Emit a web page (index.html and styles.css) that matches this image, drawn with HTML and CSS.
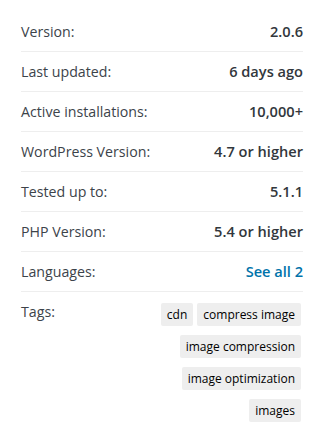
FILE: index.html
```html
<!DOCTYPE html>
<html lang="en">
<head>
  <meta charset="UTF-8">
  <meta name="viewport" content="width=device-width, initial-scale=1.0">
  <title>Plugin details</title>
  <link rel="stylesheet" href="styles.css">
</head>
<body>
  <ul class="meta">
    <li><span>Version:</span> <b>2.0.6</b></li>
    <li><span>Last updated:</span> <b>6 days ago</b></li>
    <li><span>Active installations:</span> <b>10,000+</b></li>
    <li><span>WordPress Version:</span> <b>4.7 or higher</b></li>
    <li><span>Tested up to:</span> <b>5.1.1</b></li>
    <li><span>PHP Version:</span> <b>5.4 or higher</b></li>
    <li><span>Languages:</span> <a href="#">See all 2</a></li>
    <li class="tags-row">
      <span>Tags:</span>
      <div class="tags">
        <a href="#">cdn</a>
        <a href="#">compress image</a>
        <a href="#">image compression</a>
        <a href="#">image optimization</a>
        <a href="#">images</a>
      </div>
    </li>
  </ul>
</body>
</html>
```

FILE: styles.css
```css
body { margin: 0; background: #fff; font-family: "Open Sans", "Liberation Sans", sans-serif; font-size: 14.2px; color: #32373c; }
.meta { list-style: none; margin: 12px 18px 0 21px; padding: 0; }
.meta li { display: flex; justify-content: space-between; align-items: flex-start; padding: 10px 0; line-height: 19px; border-top: 1px solid #eee; }
.meta li:first-child { border-top: 0; }
.meta li span { color: #3c434a; }
.meta b { font-size: 14.6px; font-weight: 600; color: #32373c; }
.meta a { color: #0073aa; font-size: 14.6px; font-weight: 600; text-decoration: none; }
.tags-row { padding-bottom: 0; }
.tags { display: flex; flex-wrap: wrap; justify-content: flex-end; gap: 9px 4px; max-width: 60%; margin-top: 1px; margin-right: 2px; }
.meta .tags a { background: #eee; color: #000; font-weight: 400; font-size: 12px; line-height: 23px; padding: 0 6px; border-radius: 2px; }
```
